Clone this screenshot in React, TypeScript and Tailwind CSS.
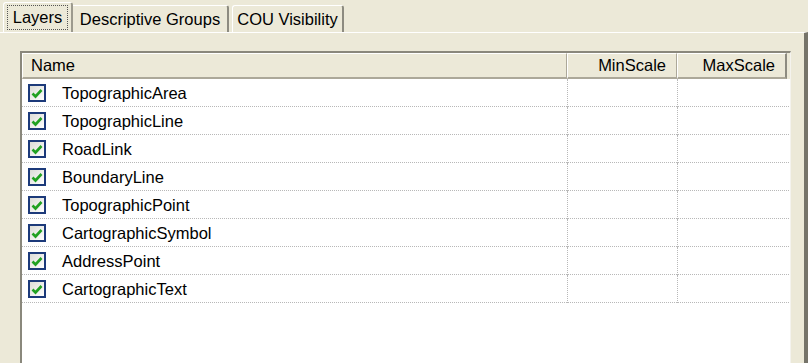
const layers = [
  'TopographicArea',
  'TopographicLine',
  'RoadLink',
  'BoundaryLine',
  'TopographicPoint',
  'CartographicSymbol',
  'AddressPoint',
  'CartographicText',
];

const font = { fontFamily: 'Tahoma, "Liberation Sans", Arial, sans-serif' };

function Check() {
  return (
    <div className="w-[18px] h-[18px] shrink-0 border-2 border-[#1c3a7a] bg-gradient-to-br from-[#dcdcd6] to-white flex items-center justify-center">
      <svg width="12" height="11" viewBox="0 0 12 11">
        <path d="M1.5 5.5 L4.5 8.5 L10.5 2" fill="none" stroke="#21a121" strokeWidth="2.6" />
      </svg>
    </div>
  );
}

export default function App() {
  return (
    <div
      className="w-[808px] h-[363px] bg-[#ece9d8] overflow-hidden flex flex-col text-black text-[16.5px]"
      style={font}
    >
      {/* --- TABS --- */}
      <div className="h-[32px] flex items-end pl-[3px] shrink-0">
        <div className="h-[30px] w-[70px] shrink-0 border-l border-t border-white border-r-2 border-r-[#9c9a8e] rounded-tl-[3px] rounded-tr-[3px] flex items-center justify-center">
          <span className="w-[61px] h-[25px] flex items-center justify-center border border-dotted border-[#555]">Layers</span>
        </div>
        <div className="h-[27px] w-[156px] shrink-0 border-t border-white border-r-2 border-r-[#8d8b80] rounded-tr-[3px] flex items-center justify-center whitespace-nowrap">
          Descriptive Groups
        </div>
        <div className="h-[27px] w-[112px] shrink-0 ml-[3px] border-l border-t border-white border-r-2 border-r-[#8d8b80] rounded-tl-[3px] rounded-tr-[3px] flex items-center justify-center whitespace-nowrap">
          COU Visibility
        </div>
      </div>

      {/* --- PANEL --- */}
      <div className="flex-1 border-t border-white border-r-[4px] border-r-[#76746a] pl-[20px] pr-[13px] pt-[18px] min-h-0">
        <div className="h-full bg-white border-l-2 border-t-2 border-[#8a887c] border-r border-r-[#f4f3ee] flex flex-col">
          {/* header */}
          <div className="h-[26px] flex shrink-0 bg-[#ece9d8]">
            <div className="w-[545px] border-l border-t border-white border-r border-b-2 border-r-[#aca899] border-b-[#aca899] flex items-center pl-[8px]">
              Name
            </div>
            <div className="w-[110px] border-l border-t border-white border-r border-b-2 border-r-[#aca899] border-b-[#aca899] flex items-center justify-end pr-[10px]">
              MinScale
            </div>
            <div className="w-[110px] border-l border-t border-white border-r-2 border-b-2 border-r-[#8d8b80] border-b-[#aca899] flex items-center justify-end pr-[10px]">
              MaxScale
            </div>
            <div className="flex-1" />
          </div>
          {/* rows */}
          {layers.map((name) => (
            <div key={name} className="h-[28px] flex shrink-0 mr-[1px]">
              <div className="w-[545px] border-b border-dotted border-[#b8b8b8] flex items-center pl-[6px] gap-[16px] pt-[1px]">
                <Check />
                <span>{name}</span>
              </div>
              <div className="w-[110px] border-b border-l border-dotted border-[#b8b8b8]" />
              <div className="flex-1 border-b border-l border-dotted border-[#b8b8b8]" />
            </div>
          ))}
        </div>
      </div>
    </div>
  );
}
